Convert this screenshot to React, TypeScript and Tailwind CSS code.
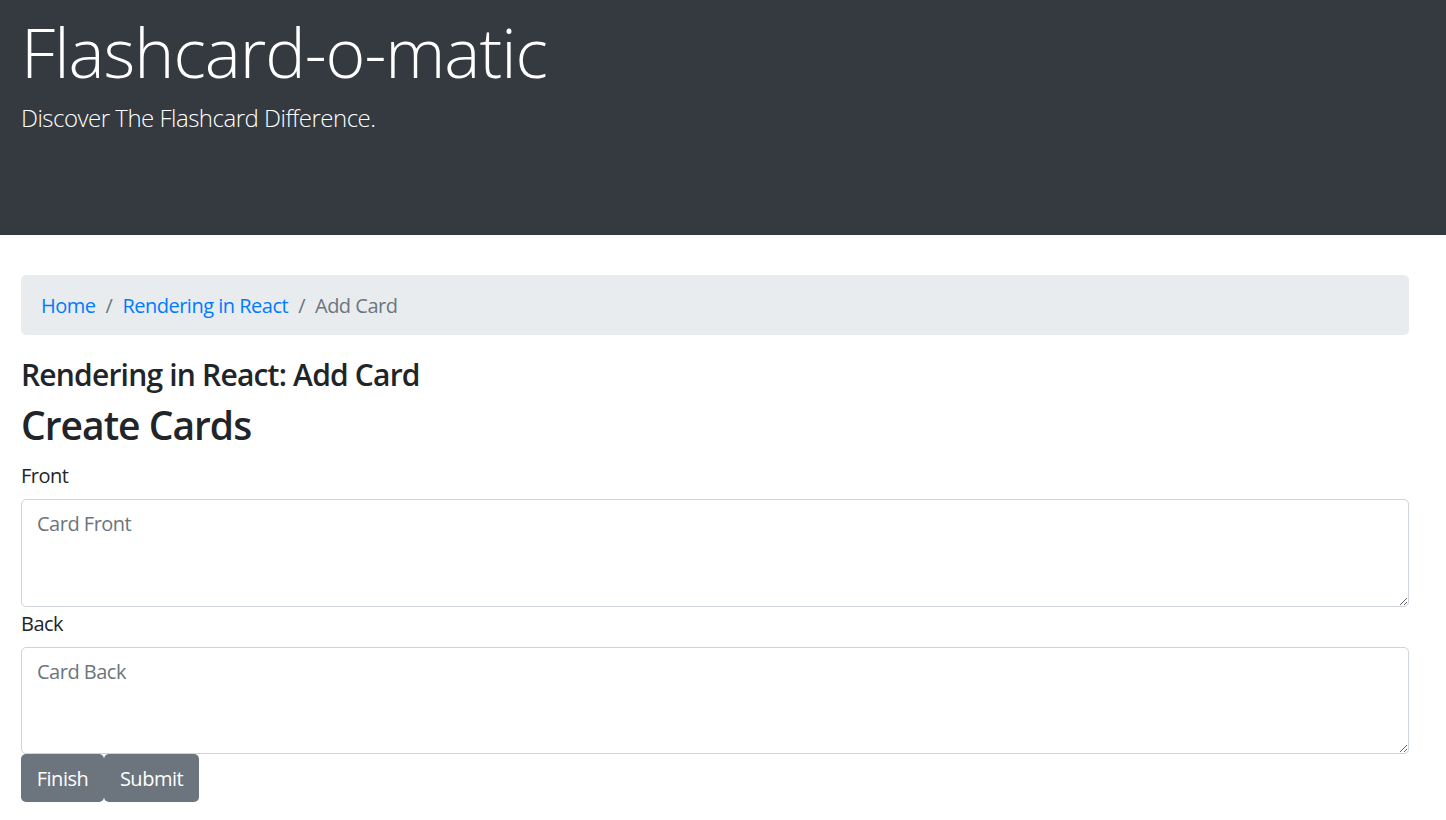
import { useState } from 'react';

const font = { fontFamily: '"Open Sans", "Noto Sans", sans-serif' };

function Header() {
  return (
    <header className="h-[235px] bg-[#343a40] px-[21px] pt-[10px] text-white">
      <h1 className="text-[68px] font-light leading-[84px] tracking-[-1px]">Flashcard-o-matic</h1>
      <p className="mt-[5px] text-[24px] font-light leading-[37px] tracking-[-0.5px]">Discover The Flashcard Difference.</p>
    </header>
  );
}

function Breadcrumb() {
  return (
    <nav aria-label="breadcrumb">
      <ol className="mb-[20px] flex h-[60px] items-center rounded-[5px] bg-[#e9ecef] px-[20px] pt-[2px] text-[20px] leading-[30px] tracking-[-0.5px]">
        <li>
          <a href="#" className="text-[#007bff]">Home</a>
        </li>
        <li className="px-[10px] text-[#6c757d]">/</li>
        <li>
          <a href="#" className="text-[#007bff]">Rendering in React</a>
        </li>
        <li className="px-[10px] text-[#6c757d]">/</li>
        <li className="text-[#6c757d]">Add Card</li>
      </ol>
    </nav>
  );
}

const labelClass = 'mb-[10px] block h-[30px] pt-[2px] text-[20px] leading-[30px] tracking-[-0.5px]';

const areaClass =
  'block h-[107.5px] w-full rounded-[5px] border border-[#ced4da] px-[15px] pt-[9px] pb-[6px] text-[20px] leading-[30px] tracking-[-0.5px] placeholder:text-[#6c757d] focus:outline-none';

export default function App() {
  const [front, setFront] = useState('');
  const [back, setBack] = useState('');

  return (
    <div className="min-h-[820px] bg-white text-[#212529]" style={font}>
      <Header />
      <main className="pl-[21px] pr-[37px] pt-[40px]">
        <Breadcrumb />
        <h4 className="mb-[10px] h-[36px] pt-[2px] text-[30px] font-semibold leading-[36px] tracking-[-0.8px]">
          Rendering in React: Add Card
        </h4>
        <h2 className="mb-[10px] h-[48px] text-[39px] font-semibold leading-[48px] tracking-[-1px]">Create Cards</h2>
        <form onSubmit={(e) => e.preventDefault()}>
          <label htmlFor="front" className={labelClass}>
            Front
          </label>
          <textarea
            id="front"
            rows={3}
            value={front}
            onChange={(e) => setFront(e.target.value)}
            placeholder="Card Front"
            className={areaClass}
          />
          <label htmlFor="back" className={labelClass}>
            Back
          </label>
          <textarea
            id="back"
            rows={3}
            value={back}
            onChange={(e) => setBack(e.target.value)}
            placeholder="Card Back"
            className={areaClass}
          />
          <div className="flex">
            <button type="button" className="h-[48px] w-[83px] rounded-[5px] bg-[#6c757d] pt-[2px] text-[20px] tracking-[-0.5px] text-white">
              Finish
            </button>
            <button type="submit" className="h-[48px] w-[95px] rounded-[5px] bg-[#6c757d] pt-[2px] text-[20px] tracking-[-0.5px] text-white">
              Submit
            </button>
          </div>
        </form>
      </main>
    </div>
  );
}
